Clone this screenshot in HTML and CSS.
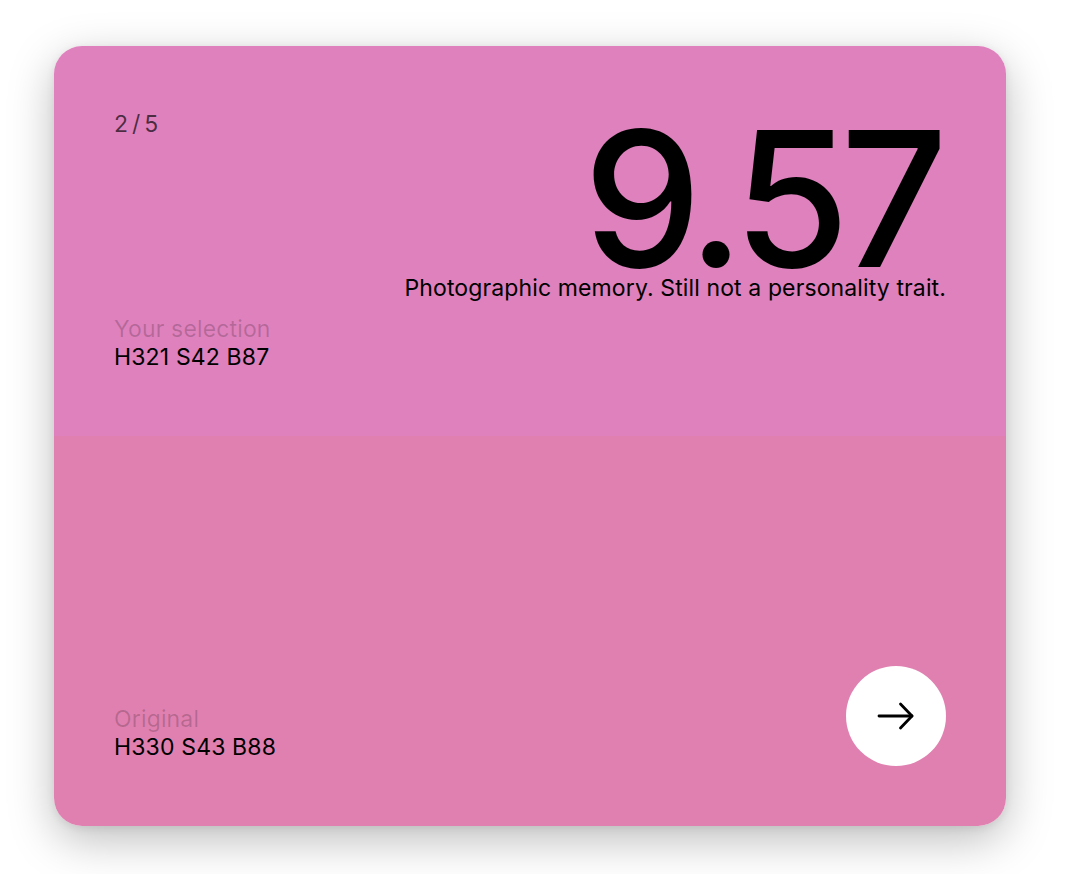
FILE: index.html
```html
<!DOCTYPE html>
<html lang="en">
<head>
<meta charset="utf-8">
<title>Color guess result</title>
<link rel="stylesheet" href="styles.css">
</head>
<body>
<main class="card">
  <section class="half half-top">
    <div class="top-row">
      <div class="counter">2/5</div>
      <div class="score">
        <div class="score-value">9.57</div>
        <div class="score-text">Photographic memory. Still not a personality trait.</div>
      </div>
    </div>
    <div class="swatch-info">
      <div class="label">Your selection</div>
      <div class="value">H321 S42 B87</div>
    </div>
  </section>
  <section class="half half-bottom">
    <div class="swatch-info">
      <div class="label">Original</div>
      <div class="value">H330 S43 B88</div>
    </div>
    <button class="next" aria-label="Next">
      <svg width="38" height="28" viewBox="0 0 38 28" fill="none" stroke="#000" stroke-width="2.8" stroke-linecap="round" stroke-linejoin="round">
        <path d="M2 14H35"/>
        <path d="M23.5 2L35 14L23.5 26"/>
      </svg>
    </button>
  </section>
</main>
</body>
</html>
```
FILE: styles.css
```css
* { box-sizing: border-box; }
html, body { margin: 0; padding: 0; background: #ffffff; }
body {
  font-family: "Inter", "Noto Sans", sans-serif;
  padding: 46px 0 0 54px;
  height: 874px;
}
.card {
  width: 952px;
  height: 780px;
  border-radius: 28px;
  overflow: hidden;
  display: flex;
  flex-direction: column;
  box-shadow: 0 14px 46px rgba(0,0,0,0.26), 0 2px 8px rgba(0,0,0,0.08);
}
.half {
  height: 390px;
  padding: 60px;
  display: flex;
}
.half-top {
  background: #de81bd;
  flex-direction: column;
  justify-content: space-between;
}
.half-bottom {
  background: #e080b0;
  align-items: flex-end;
  justify-content: space-between;
}
.top-row {
  display: flex;
  justify-content: space-between;
  align-items: flex-start;
}
.counter {
  font-size: 23px;
  line-height: 28px;
  margin-top: 4px;
  letter-spacing: 4px;
  color: rgba(0,0,0,0.66);
}
.score {
  display: flex;
  flex-direction: column;
  align-items: flex-end;
  margin-top: 18px;
}
.score-value {
  font-size: 188px;
  line-height: 150px;
  font-weight: 500;
  letter-spacing: -9px;
  color: #000;
  margin-right: 7px;
}
.score-text {
  font-size: 23px;
  line-height: 28px;
  letter-spacing: 0.12px;
  color: #000;
}
.swatch-info {
  font-size: 23px;
  line-height: 28.5px;
  letter-spacing: 0.15px;
  margin-bottom: 4.5px;
}
.label { color: rgba(0,0,0,0.19); }
.value { color: #000; }
.next {
  width: 100px;
  height: 100px;
  border-radius: 50%;
  border: none;
  background: #fff;
  display: flex;
  align-items: center;
  justify-content: center;
  padding: 0;
}
```
